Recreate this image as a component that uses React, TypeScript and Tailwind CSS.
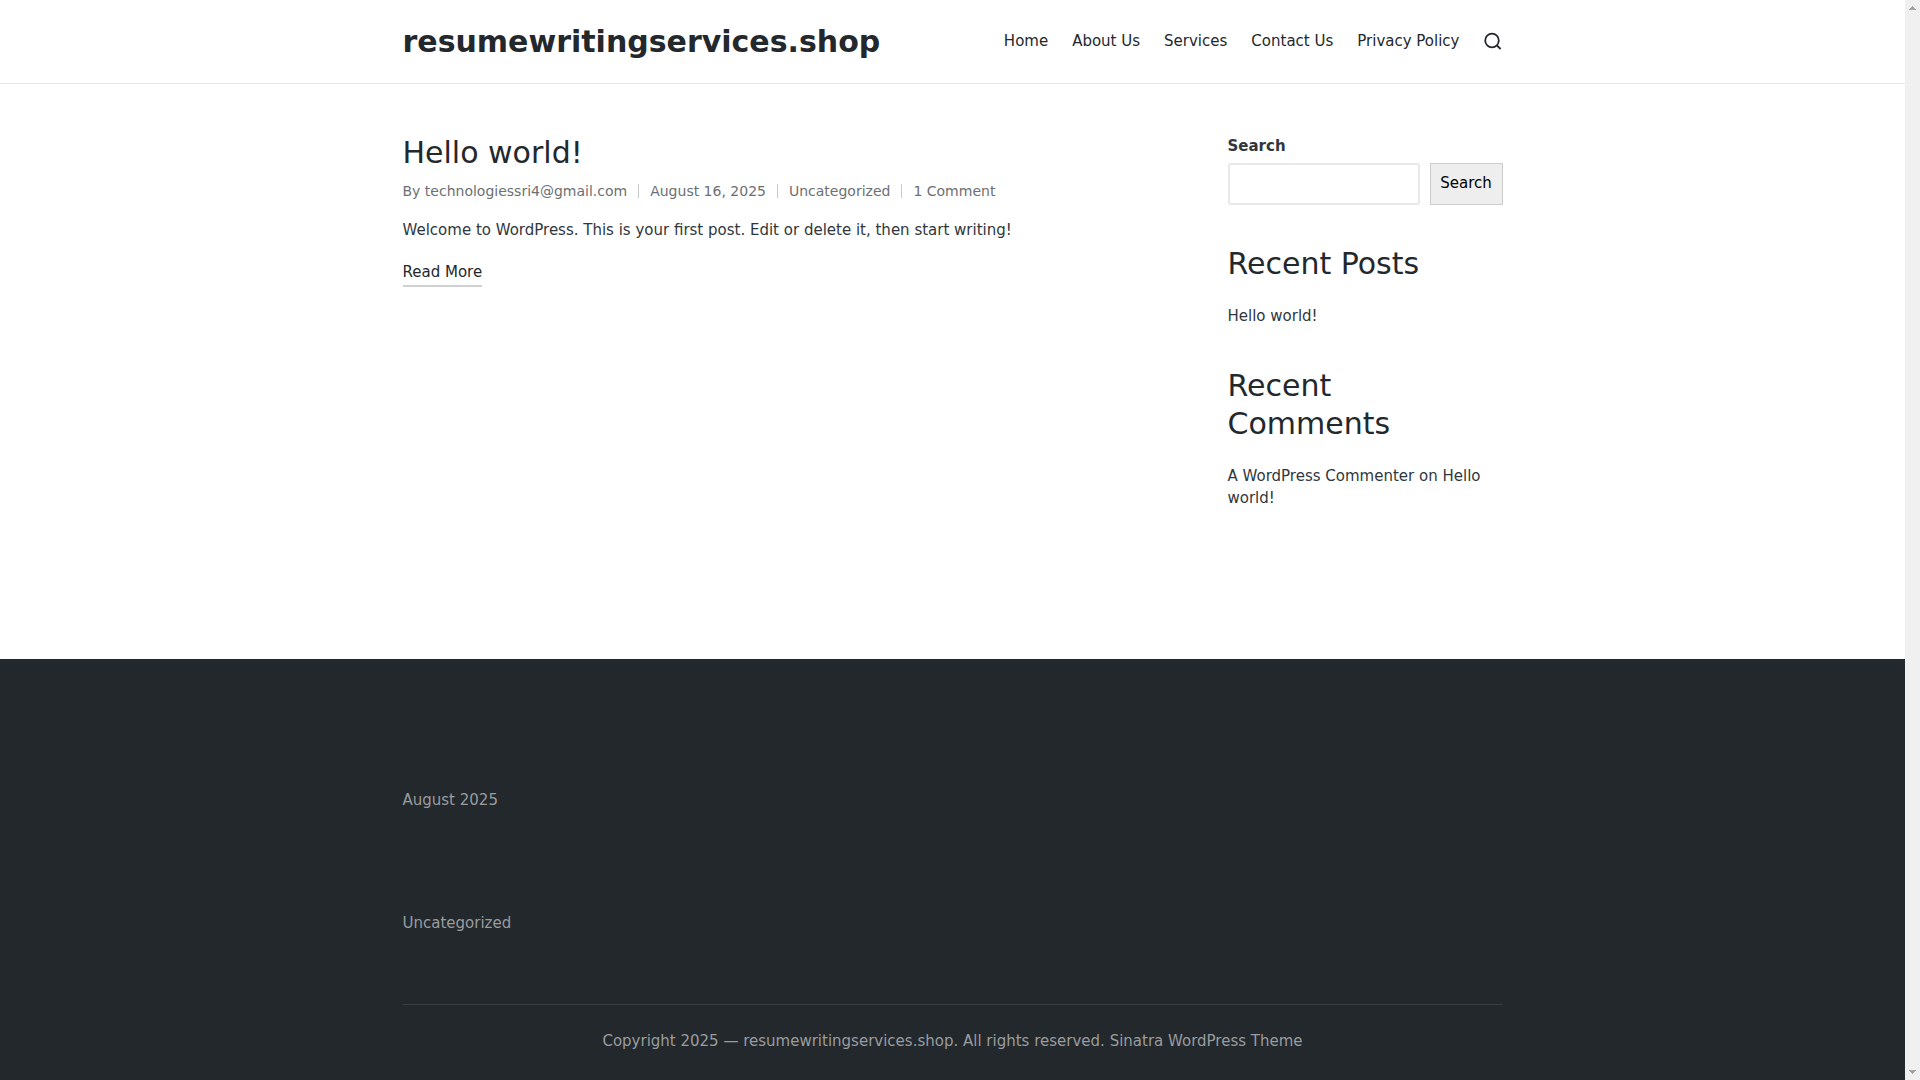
const navItems = ["Home", "About Us", "Services", "Contact Us", "Privacy Policy"];

const postMeta = ["By technologiessri4@gmail.com", "August 16, 2025", "Uncategorized", "1 Comment"];

function Header() {
  return (
    <header className="border-b border-[#e6e7e8]">
      <div className="mx-auto flex h-[83px] max-w-[1100px] items-center justify-between">
        <a href="#" className="text-[30px] leading-[38px] font-bold text-[#23282d]">
          resumewritingservices.shop
        </a>
        <div className="flex items-center gap-6 pb-0.5">
          <nav className="flex gap-6 text-[#23282d]">
            {navItems.map((item) => (
              <a key={item} href="#">{item}</a>
            ))}
          </nav>
          <button type="button" aria-label="Search" className="pr-px text-[#23282d]">
            <svg width="18" height="18" viewBox="0 0 18 18" fill="none" stroke="currentColor" strokeWidth="1.8">
              <circle cx="8" cy="8.5" r="6.8" />
              <path d="M13 13.5L16.6 17" />
            </svg>
          </button>
        </div>
      </div>
    </header>
  );
}

function Post() {
  return (
    <article className="flex-1">
      <h2 className="text-[30px] leading-[38px] text-[#23282d]">
        <a href="#">Hello world!</a>
      </h2>
      <div className="mt-2 flex items-center text-sm leading-[22px] text-[#6c7074]">
        {postMeta.map((item, i) => (
          <div key={item} className="flex items-center">
            {i > 0 && <span className="mx-[11px] h-3.5 w-px bg-[#c9cacc]" />}
            <a href="#">{item}</a>
          </div>
        ))}
      </div>
      <p className="mt-[17px]">Welcome to WordPress. This is your first post. Edit or delete it, then start writing!</p>
      <a href="#" className="mt-5 inline-block border-b-2 border-[#d0d1d3] pb-0.5 text-[#23282d]">
        Read More
      </a>
    </article>
  );
}

function Widget({ title, children }: { title: string; children: React.ReactNode }) {
  return (
    <section>
      <h2 className="mb-[22px] text-[30px] leading-[38px] text-[#23282d]">{title}</h2>
      {children}
    </section>
  );
}

function Sidebar() {
  return (
    <aside className="flex w-1/4 flex-col gap-10">
      <form>
        <label htmlFor="sidebar-search" className="block leading-6 font-bold">Search</label>
        <div className="mt-[5px] flex gap-2.5">
          <input
            id="sidebar-search"
            type="search"
            className="h-[42px] min-w-0 flex-1 rounded-xs border-2 border-[#e9e9e9] bg-white px-2"
          />
          <button type="button" className="w-[73px] border border-[#ccc] bg-[#eee] pb-0.5 text-black">Search</button>
        </div>
      </form>
      <Widget title="Recent Posts">
        <a href="#">Hello world!</a>
      </Widget>
      <Widget title="Recent Comments">
        <a href="#">A WordPress Commenter</a> on <a href="#">Hello world!</a>
      </Widget>
    </aside>
  );
}

function Footer() {
  return (
    <footer className="flex-1 bg-[#23282c] text-[#999c9f]">
      <div className="mx-auto max-w-[1100px]">
        <div className="flex flex-col gap-[41px] pt-[70px] pb-[70px]">
          <Widget title="Archives">
            <a href="#">August 2025</a>
          </Widget>
          <Widget title="Categories">
            <a href="#">Uncategorized</a>
          </Widget>
        </div>
        <div className="border-t border-[#393e42] py-[25px] text-center">
          Copyright 2025 — <a href="#">resumewritingservices.shop</a>. All rights reserved.{" "}
          <a href="#">Sinatra WordPress Theme</a>
        </div>
      </div>
    </footer>
  );
}

function Scrollbar() {
  return (
    <div className="flex w-[15px] shrink-0 flex-col items-center justify-between bg-[#f0f0f0] py-1.5 text-[#a3a3a3]">
      <svg width="7" height="4" viewBox="0 0 7 4" fill="currentColor" shapeRendering="crispEdges">
        <path d="M3 0h1v1h1v1h1v1h1v1H0V3h1V2h1V1h1z" />
      </svg>
      <svg width="7" height="4" viewBox="0 0 7 4" fill="currentColor" shapeRendering="crispEdges">
        <path d="M0 0h7v1H6v1H5v1H4v1H3V3H2V2H1V1H0z" />
      </svg>
    </div>
  );
}

export default function App() {
  return (
    <div className="flex min-h-screen bg-white font-['DejaVu_Sans',sans-serif] text-[15px] leading-[22px] text-[#30373e]">
      <div className="flex flex-1 flex-col">
        <Header />
        <main className="mx-auto flex w-full max-w-[1100px] pt-[50px] pb-[150px]">
          <Post />
          <Sidebar />
        </main>
        <Footer />
      </div>
      <Scrollbar />
    </div>
  );
}
